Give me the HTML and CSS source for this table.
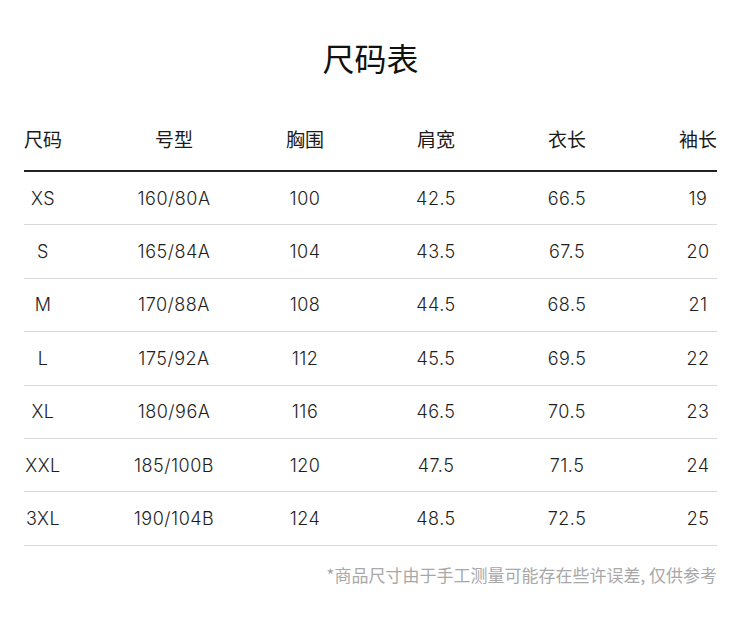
FILE: index.html
```html
<!DOCTYPE html>
<html lang="zh">
<head>
<meta charset="utf-8">
<title>尺码表</title>
<link rel="stylesheet" href="styles.css">
</head>
<body>
<div class="page">
  <h1 class="title">尺码表</h1>
  <div class="table">
    <div class="row head">
      <span class="cell">尺码</span><span class="cell">号型</span><span class="cell">胸围</span><span class="cell">肩宽</span><span class="cell">衣长</span><span class="cell">袖长</span>
    </div>
    <div class="row"><span class="cell">XS</span><span class="cell">160/80A</span><span class="cell">100</span><span class="cell">42.5</span><span class="cell">66.5</span><span class="cell">19</span></div>
    <div class="row"><span class="cell">S</span><span class="cell">165/84A</span><span class="cell">104</span><span class="cell">43.5</span><span class="cell">67.5</span><span class="cell">20</span></div>
    <div class="row"><span class="cell">M</span><span class="cell">170/88A</span><span class="cell">108</span><span class="cell">44.5</span><span class="cell">68.5</span><span class="cell">21</span></div>
    <div class="row"><span class="cell">L</span><span class="cell">175/92A</span><span class="cell">112</span><span class="cell">45.5</span><span class="cell">69.5</span><span class="cell">22</span></div>
    <div class="row"><span class="cell">XL</span><span class="cell">180/96A</span><span class="cell">116</span><span class="cell">46.5</span><span class="cell">70.5</span><span class="cell">23</span></div>
    <div class="row"><span class="cell">XXL</span><span class="cell">185/100B</span><span class="cell">120</span><span class="cell">47.5</span><span class="cell">71.5</span><span class="cell">24</span></div>
    <div class="row"><span class="cell">3XL</span><span class="cell">190/104B</span><span class="cell">124</span><span class="cell">48.5</span><span class="cell">72.5</span><span class="cell">25</span></div>
  </div>
  <p class="note">*商品尺寸由于手工测量可能存在些许误差, 仅供参考</p>
</div>
</body>
</html>
```

FILE: styles.css
```css
html, body {
  margin: 0;
  padding: 0;
  background: #ffffff;
}
body {
  font-family: Inter, "Liberation Sans", "Noto Sans CJK SC", sans-serif;
  color: #222;
}
.page {
  width: 693px;
  padding: 35px 33px 0 24px;
}
.title {
  margin: 0;
  font-family: "Noto Sans CJK SC", sans-serif;
  font-size: 32px;
  font-weight: 400;
  line-height: 44px;
  text-align: center;
  color: #111;
}
.table {
  margin-top: 27px;
}
.row {
  display: flex;
  justify-content: space-between;
  align-items: center;
  height: 52.4px;
  border-bottom: 1px solid #d8d8d8;
  font-size: 18px;
  font-weight: 300;
  letter-spacing: 0.5px;
  color: #1e1e1e;
}
.row.head {
  height: 63px;
  padding-top: 1px;
  border-bottom: 2px solid #222;
  font-family: "Noto Sans CJK SC", sans-serif;
  font-size: 19px;
  font-weight: 400;
  letter-spacing: 0;
  color: #1a1a1a;
}
.cell {
  width: 38px;
  display: flex;
  justify-content: center;
  white-space: nowrap;
}
.note {
  margin: 16px 0 0;
  text-align: right;
  font-family: "Noto Sans CJK SC", sans-serif;
  font-size: 17px;
  color: #a8a8a8;
}
```
